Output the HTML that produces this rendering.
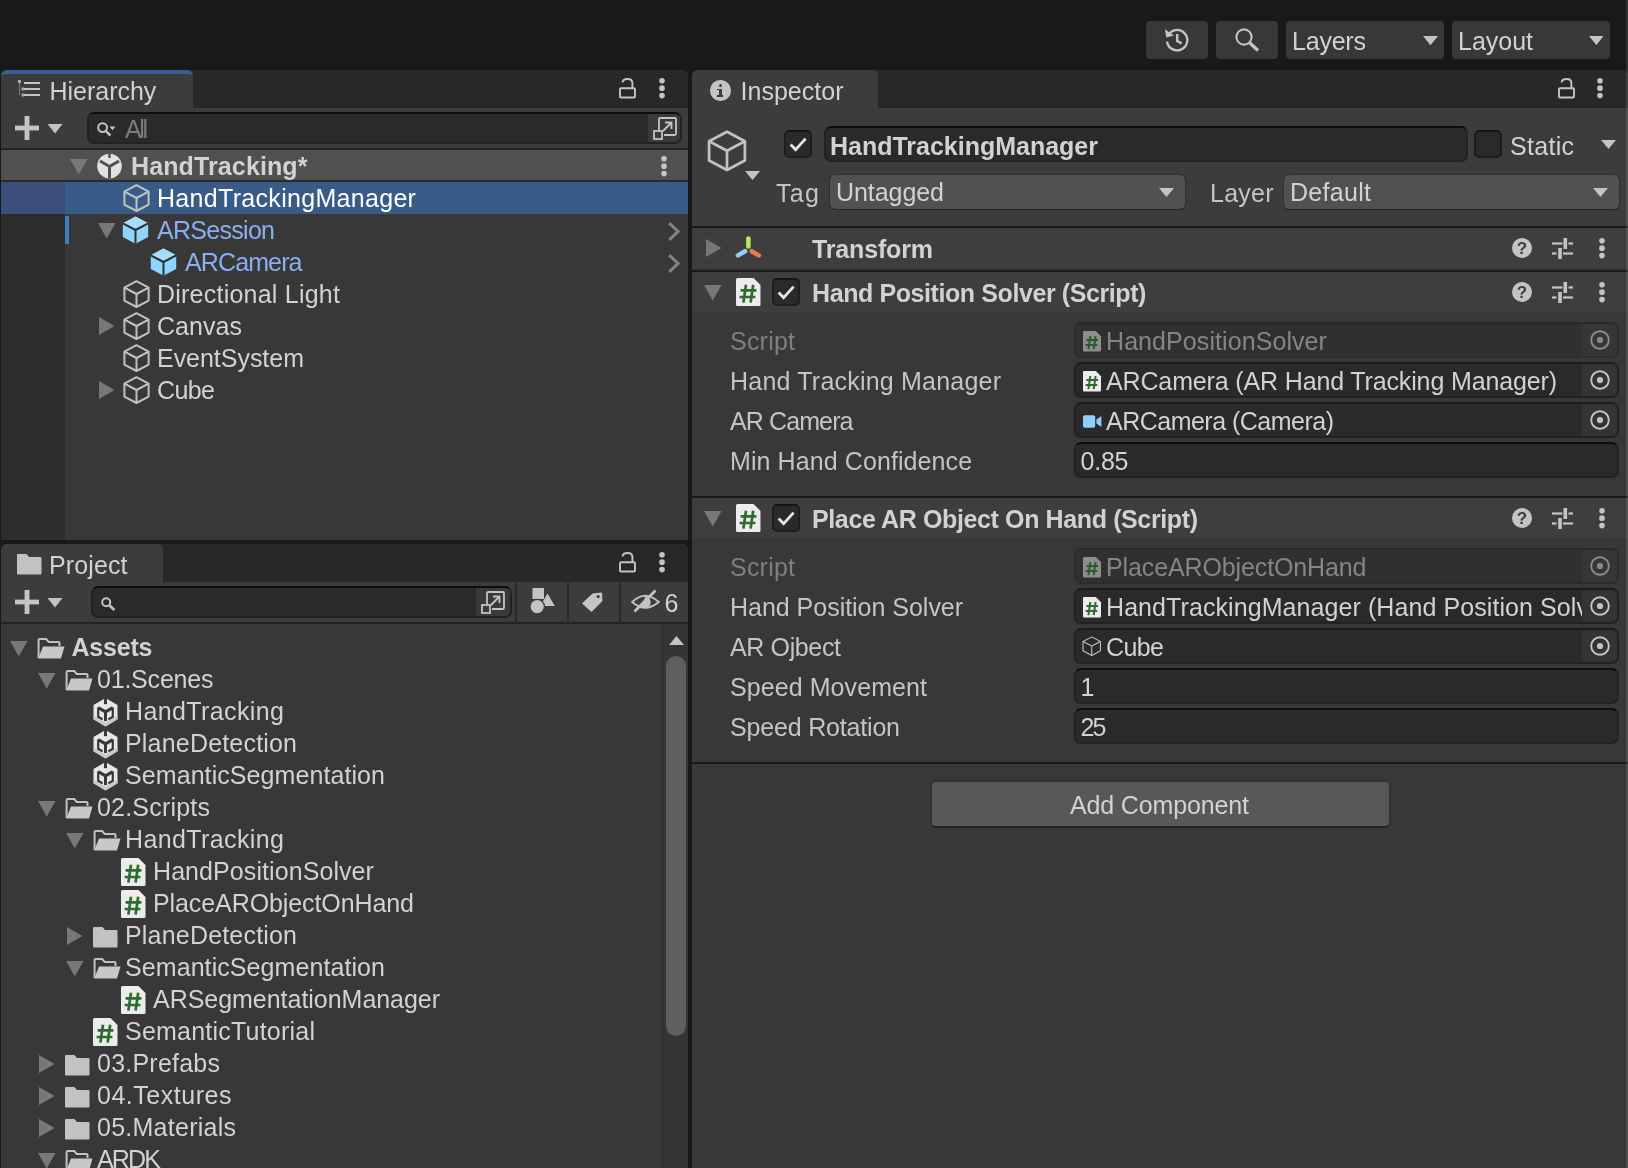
<!DOCTYPE html>
<html><head><meta charset="utf-8"><title>Unity Editor</title><style>
html,body{margin:0;padding:0;background:#191919;}
body{width:1628px;height:1168px;position:relative;overflow:hidden;font-family:"Liberation Sans",sans-serif;}
#r div,#r svg,#r span{position:absolute;box-sizing:border-box;}
#r span{white-space:pre;display:block;}
#r{position:absolute;left:0;top:0;width:1628px;height:1168px;overflow:hidden;will-change:transform;transform:translateZ(0);}
</style></head>
<body><div id="r">
<div style="left:1146px;top:21px;width:62px;height:38px;background:#383838;border-radius:4px;"></div>
<div style="left:1216px;top:21px;width:62px;height:38px;background:#383838;border-radius:4px;"></div>
<div style="left:1286px;top:21px;width:158px;height:38px;background:#383838;border-radius:4px;"></div>
<div style="left:1452px;top:21px;width:158px;height:38px;background:#383838;border-radius:4px;"></div>
<svg style="left:1164px;top:27px" width="26" height="26" viewBox="0 0 26 26"><g fill="none" stroke="#c4c4c4" stroke-width="2.3"><path d="M4.2 8.2 A10.2 10.2 0 1 1 3 14.5"/><path d="M13.2 7 V14 L17.6 16.4" stroke-width="2.5"/></g><path d="M1 2.2 L2.2 10.6 L10 8.6 Z" fill="#c4c4c4"/></svg>
<svg style="left:1234.5px;top:28px" width="25" height="24" viewBox="0 0 25 24"><circle cx="9" cy="9" r="7.6" fill="none" stroke="#c4c4c4" stroke-width="2.1"/><path d="M14.6 14.8 L23 22.4" stroke="#c4c4c4" stroke-width="3.4"/></svg>
<span style="left:1292px;top:24.5px;line-height:32px;font-size:25px;color:#d2d2d2;letter-spacing:-0.21px;">Layers</span>
<span style="left:1458px;top:24.5px;line-height:32px;font-size:25px;color:#d2d2d2;letter-spacing:-0.01px;">Layout</span>
<div style="left:1px;top:70px;width:687px;height:470px;background:#383838;border-radius:6px 6px 0 0;"></div>
<div style="left:1px;top:70px;width:687px;height:38px;background:#282828;border-radius:6px 6px 0 0;"></div>
<div style="left:1px;top:70px;width:192px;height:38px;background:#3c3c3c;border-radius:6px 6px 0 0;border-top:4px solid #3a5f93;"></div>
<div style="left:1px;top:108px;width:687px;height:40px;background:#3c3c3c;"></div>
<div style="left:1px;top:148px;width:687px;height:2px;background:#232323;"></div>
<div style="left:1px;top:150px;width:687px;height:30px;background:#505050;"></div>
<div style="left:1px;top:180px;width:687px;height:2px;background:#2b2b2b;"></div>
<div style="left:1px;top:182px;width:64px;height:358px;background:#2d2d2d;"></div>
<div style="left:1px;top:544px;width:687px;height:624px;background:#383838;border-radius:6px 6px 0 0;"></div>
<div style="left:1px;top:544px;width:687px;height:38px;background:#282828;border-radius:6px 6px 0 0;"></div>
<div style="left:1px;top:544px;width:162px;height:38px;background:#3c3c3c;border-radius:6px 6px 0 0;"></div>
<div style="left:1px;top:582px;width:687px;height:40px;background:#3c3c3c;"></div>
<div style="left:1px;top:622px;width:687px;height:2px;background:#232323;"></div>
<div style="left:692px;top:70px;width:936px;height:1098px;background:#383838;border-radius:6px 6px 0 0;"></div>
<div style="left:692px;top:70px;width:936px;height:38px;background:#282828;border-radius:6px 6px 0 0;"></div>
<div style="left:692px;top:70px;width:186px;height:38px;background:#3c3c3c;border-radius:6px 6px 0 0;"></div>
<div style="left:692px;top:108px;width:936px;height:118px;background:#3c3c3c;"></div>
<svg style="left:1422.5px;top:35.8px" width="15" height="9.2" viewBox="0 0 15 9.2"><polygon points="0,0 15,0 7.5,9.2" fill="#c4c4c4"/></svg>
<svg style="left:1588.8px;top:36px" width="14.6" height="9" viewBox="0 0 14.6 9"><polygon points="0,0 14.6,0 7.3,9" fill="#c4c4c4"/></svg>
<svg style="left:17px;top:80px" width="23" height="18" viewBox="0 0 23 18"><g fill="#c4c4c4"><rect x="7" y="2" width="16" height="2"/><rect x="7" y="8" width="16" height="2"/><rect x="7" y="14" width="16" height="2"/><rect x="1" y="0" width="3" height="3" opacity=".8"/><rect x="4.5" y="7.5" width="3" height="3" opacity=".8"/><rect x="4.5" y="13.5" width="3" height="3" opacity=".8"/><rect x="2" y="2" width="1" height="13" opacity=".45"/></g></svg>
<span style="left:49.4px;top:74.9px;line-height:32px;font-size:25px;color:#d2d2d2;letter-spacing:0.0px;">Hierarchy</span>
<svg style="left:619px;top:77.5px" width="18" height="21" viewBox="0 0 18 21"><g fill="none" stroke="#c4c4c4" stroke-width="1.9"><rect x="1" y="10.2" width="15" height="9.3" rx="1"/><path d="M3.6 4.5 Q3.6 1 8.5 1 Q13.4 1 13.4 5 L13.4 10"/></g></svg>
<svg style="left:658px;top:77px" width="8" height="23" viewBox="0 0 8 23"><g fill="#c4c4c4"><circle cx="4" cy="3.7" r="2.8"/><circle cx="4" cy="11.15" r="2.8"/><circle cx="4" cy="18.6" r="2.8"/></g></svg>
<svg style="left:15px;top:116px" width="50" height="24" viewBox="0 0 50 24"><g fill="#c4c4c4"><rect x="0" y="9.6" width="24" height="4.8"/><rect x="9.6" y="0" width="4.8" height="24"/><polygon points="32.5,8 47.5,8 40,17.5"/></g></svg>
<div style="left:87px;top:112px;width:595px;height:32px;background:#2a2a2a;border:2px solid #222;border-top-color:#0d0d0d;border-radius:7px;"></div>
<div style="left:648px;top:114px;width:32px;height:28px;background:#3a3a3a;border-radius:0 5px 5px 0;"></div>
<svg style="left:653px;top:116.5px" width="24" height="23" viewBox="0 0 24 23"><g fill="none" stroke="#c4c4c4" stroke-width="1.8"><path d="M6 13 V2.2 Q6 1 7.2 1 H21.8 Q23 1 23 2.2 V16.8 Q23 18 21.8 18 H11"/><rect x="1" y="14" width="8" height="8"/><path d="M10 14 L18 6 M12 5.5 H18.5 V12"/></g></svg>
<svg style="left:97px;top:122px" width="19" height="15" viewBox="0 0 19 15"><circle cx="5.6" cy="5.6" r="4.4" fill="none" stroke="#c4c4c4" stroke-width="2"/><path d="M8.8 8.8 L13.4 13.6" stroke="#c4c4c4" stroke-width="2.4"/><polygon points="12.5,4.5 18.5,4.5 15.5,8.2" fill="#c4c4c4"/></svg>
<span style="left:125px;top:112.9px;line-height:32px;font-size:25px;color:#7b7b7b;letter-spacing:-2.4px;">All</span>
<svg style="left:69.5px;top:159px" width="18" height="16" viewBox="0 0 18 16"><polygon points="0,0 17.5,0 8.75,15.5" fill="#787878"/></svg>
<svg style="left:97px;top:151.5px" width="25" height="28" viewBox="0 0 25 28"><circle cx="12.5" cy="14" r="12.3" fill="#e2e2e2"/><g fill="none" stroke="#505050" stroke-width="3"><path d="M12.5 14.5 V26 M12.5 14.5 L3 9 M12.5 14.5 L22 9"/><path d="M12.5 0 V6" stroke-width="2.4"/></g></svg>
<span style="left:131px;top:150.0px;line-height:32px;font-size:25px;color:#d2d2d2;letter-spacing:0.12px;font-weight:700;">HandTracking*</span>
<svg style="left:660px;top:155px" width="8" height="23" viewBox="0 0 8 23"><g fill="#c4c4c4"><circle cx="4" cy="3.7" r="2.8"/><circle cx="4" cy="11.15" r="2.8"/><circle cx="4" cy="18.6" r="2.8"/></g></svg>
<div style="left:1px;top:182px;width:64px;height:32px;background:#3b4f7b;"></div>
<div style="left:65px;top:182px;width:623px;height:32px;background:#395b87;"></div>
<svg style="left:122.5px;top:184.4px" width="28" height="29" viewBox="0 0 28 29"><g transform="scale(1.0)" fill="none" stroke="#c2c2c2" stroke-width="2.0" stroke-linejoin="round"><path d="M13.5 1.2 L25.6 7.6 V20.6 L13.5 27 L1.4 20.6 V7.6 Z"/><path d="M1.4 7.6 L13.5 14 L25.6 7.6 M13.5 14 V27"/></g></svg>
<span style="left:157px;top:181.9px;line-height:32px;font-size:25px;color:#ffffff;letter-spacing:0.31px;">HandTrackingManager</span>
<div style="left:65px;top:216px;width:4px;height:28px;background:#3f7dc4;"></div>
<svg style="left:97.5px;top:222.8px" width="18" height="16" viewBox="0 0 18 16"><polygon points="0,0 17.5,0 8.75,15.5" fill="#787878"/></svg>
<svg style="left:122.3px;top:216px" width="28" height="29" viewBox="0 0 28 29"><path d="M13.5 0.6 L26.2 7.3 V21 L13.5 27.8 L0.8 21 V7.3 Z" fill="#8fd4fb"/><path d="M13.5 0.6 L26.2 7.3 L13.5 14 L0.8 7.3 Z" fill="#a5defd"/><path d="M0.8 7.3 L13.5 14 L26.2 7.3 M13.5 14 V27.8" fill="none" stroke="#2f2f2f" stroke-width="2"/></svg>
<span style="left:157px;top:213.9px;line-height:32px;font-size:25px;color:#8badf3;letter-spacing:-0.71px;">ARSession</span>
<svg style="left:668px;top:222px" width="12" height="19" viewBox="0 0 12 19"><path d="M1.2 1.2 L10 9.5 L1.2 17.8" fill="none" stroke="#828282" stroke-width="3"/></svg>
<svg style="left:150.3px;top:248px" width="28" height="29" viewBox="0 0 28 29"><path d="M13.5 0.6 L26.2 7.3 V21 L13.5 27.8 L0.8 21 V7.3 Z" fill="#8fd4fb"/><path d="M13.5 0.6 L26.2 7.3 L13.5 14 L0.8 7.3 Z" fill="#a5defd"/><path d="M0.8 7.3 L13.5 14 L26.2 7.3 M13.5 14 V27.8" fill="none" stroke="#2f2f2f" stroke-width="2"/></svg>
<span style="left:185px;top:245.9px;line-height:32px;font-size:25px;color:#8badf3;letter-spacing:-0.88px;">ARCamera</span>
<svg style="left:668px;top:254px" width="12" height="19" viewBox="0 0 12 19"><path d="M1.2 1.2 L10 9.5 L1.2 17.8" fill="none" stroke="#828282" stroke-width="3"/></svg>
<svg style="left:122.5px;top:280.4px" width="28" height="29" viewBox="0 0 28 29"><g transform="scale(1.0)" fill="none" stroke="#c2c2c2" stroke-width="2.0" stroke-linejoin="round"><path d="M13.5 1.2 L25.6 7.6 V20.6 L13.5 27 L1.4 20.6 V7.6 Z"/><path d="M1.4 7.6 L13.5 14 L25.6 7.6 M13.5 14 V27"/></g></svg>
<span style="left:157px;top:277.9px;line-height:32px;font-size:25px;color:#d2d2d2;letter-spacing:0.23px;">Directional Light</span>
<svg style="left:99px;top:317px" width="16" height="18" viewBox="0 0 16 18"><polygon points="0,0 15.5,9 0,18" fill="#787878"/></svg>
<svg style="left:122.5px;top:312.4px" width="28" height="29" viewBox="0 0 28 29"><g transform="scale(1.0)" fill="none" stroke="#c2c2c2" stroke-width="2.0" stroke-linejoin="round"><path d="M13.5 1.2 L25.6 7.6 V20.6 L13.5 27 L1.4 20.6 V7.6 Z"/><path d="M1.4 7.6 L13.5 14 L25.6 7.6 M13.5 14 V27"/></g></svg>
<span style="left:157px;top:309.9px;line-height:32px;font-size:25px;color:#d2d2d2;letter-spacing:0.05px;">Canvas</span>
<svg style="left:122.5px;top:344.4px" width="28" height="29" viewBox="0 0 28 29"><g transform="scale(1.0)" fill="none" stroke="#c2c2c2" stroke-width="2.0" stroke-linejoin="round"><path d="M13.5 1.2 L25.6 7.6 V20.6 L13.5 27 L1.4 20.6 V7.6 Z"/><path d="M1.4 7.6 L13.5 14 L25.6 7.6 M13.5 14 V27"/></g></svg>
<span style="left:157px;top:341.9px;line-height:32px;font-size:25px;color:#d2d2d2;letter-spacing:-0.03px;">EventSystem</span>
<svg style="left:99px;top:381px" width="16" height="18" viewBox="0 0 16 18"><polygon points="0,0 15.5,9 0,18" fill="#787878"/></svg>
<svg style="left:122.5px;top:376.4px" width="28" height="29" viewBox="0 0 28 29"><g transform="scale(1.0)" fill="none" stroke="#c2c2c2" stroke-width="2.0" stroke-linejoin="round"><path d="M13.5 1.2 L25.6 7.6 V20.6 L13.5 27 L1.4 20.6 V7.6 Z"/><path d="M1.4 7.6 L13.5 14 L25.6 7.6 M13.5 14 V27"/></g></svg>
<span style="left:157px;top:373.9px;line-height:32px;font-size:25px;color:#d2d2d2;letter-spacing:-0.59px;">Cube</span>
<svg style="left:16.5px;top:553.5px" width="25" height="21" viewBox="0 0 25 21"><path d="M1 0 H9.5 L12 3 H23.5 Q24.5 3 24.5 4 V19.5 Q24.5 20.5 23.5 20.5 H1 Q0 20.5 0 19.5 V1 Q0 0 1 0 Z" fill="#c2c2c2"/></svg>
<span style="left:49px;top:548.9px;line-height:32px;font-size:25px;color:#d2d2d2;letter-spacing:0.11px;">Project</span>
<svg style="left:619px;top:551.5px" width="18" height="21" viewBox="0 0 18 21"><g fill="none" stroke="#c4c4c4" stroke-width="1.9"><rect x="1" y="10.2" width="15" height="9.3" rx="1"/><path d="M3.6 4.5 Q3.6 1 8.5 1 Q13.4 1 13.4 5 L13.4 10"/></g></svg>
<svg style="left:658px;top:551px" width="8" height="23" viewBox="0 0 8 23"><g fill="#c4c4c4"><circle cx="4" cy="3.7" r="2.8"/><circle cx="4" cy="11.15" r="2.8"/><circle cx="4" cy="18.6" r="2.8"/></g></svg>
<svg style="left:15px;top:590px" width="50" height="24" viewBox="0 0 50 24"><g fill="#c4c4c4"><rect x="0" y="9.6" width="24" height="4.8"/><rect x="9.6" y="0" width="4.8" height="24"/><polygon points="32.5,8 47.5,8 40,17.5"/></g></svg>
<div style="left:91px;top:586px;width:421px;height:32px;background:#2a2a2a;border:2px solid #222;border-top-color:#0d0d0d;border-radius:7px;"></div>
<div style="left:476px;top:588px;width:34px;height:28px;background:#3a3a3a;border-radius:0 5px 5px 0;"></div>
<svg style="left:481px;top:590.5px" width="24" height="23" viewBox="0 0 24 23"><g fill="none" stroke="#c4c4c4" stroke-width="1.8"><path d="M6 13 V2.2 Q6 1 7.2 1 H21.8 Q23 1 23 2.2 V16.8 Q23 18 21.8 18 H11"/><rect x="1" y="14" width="8" height="8"/><path d="M10 14 L18 6 M12 5.5 H18.5 V12"/></g></svg>
<svg style="left:100.5px;top:597px" width="15" height="14" viewBox="0 0 15 14"><circle cx="5.2" cy="5.2" r="4" fill="none" stroke="#c4c4c4" stroke-width="2"/><path d="M8.2 8.2 L13.4 13" stroke="#c4c4c4" stroke-width="2.6"/></svg>
<div style="left:515px;top:582px;width:2px;height:40px;background:#2a2a2a;"></div>
<div style="left:567px;top:582px;width:2px;height:40px;background:#2a2a2a;"></div>
<div style="left:619px;top:582px;width:2px;height:40px;background:#2a2a2a;"></div>
<svg style="left:529.5px;top:588px" width="25" height="26" viewBox="0 0 25 26"><g fill="#c4c4c4"><rect x="2.5" y="0" width="11.5" height="11"/><polygon points="17.5,5.5 24.8,18 10.2,18"/><circle cx="7.2" cy="18.6" r="7.2" stroke="#3c3c3c" stroke-width="1.2"/></g></svg>
<svg style="left:582px;top:592px" width="21" height="20" viewBox="0 0 21 20"><path d="M0 11.5 L10.5 1.5 L20 0.5 L20.5 9 L9.5 20 Z" fill="#c4c4c4"/><circle cx="16.2" cy="4.6" r="1.6" fill="#3c3c3c"/></svg>
<svg style="left:631px;top:589px" width="29" height="24" viewBox="0 0 29 24"><g fill="none" stroke="#c4c4c4" stroke-width="1.9"><path d="M1.2 13 Q14 0.5 27.8 13 Q14 24.5 1.2 13 Z"/><path d="M3.5 22.5 L24.5 1.5" stroke-width="2.6"/></g><path d="M14 7.5 A5.6 5.6 0 1 1 9 15.5 Q13.5 13 14 7.5Z" fill="#c4c4c4"/></svg>
<span style="left:664.5px;top:586.9px;line-height:32px;font-size:25px;color:#d2d2d2;letter-spacing:0.35px;">6</span>
<div style="left:662px;top:624px;width:26px;height:544px;background:#353535;"></div>
<div style="left:662px;top:624px;width:2px;height:544px;background:#303030;"></div>
<svg style="left:668.5px;top:635.5px" width="15" height="9" viewBox="0 0 15 9"><polygon points="0,9 15,9 7.5,0" fill="#c4c4c4"/></svg>
<div style="left:666px;top:655.5px;width:20px;height:380px;background:#5f5f5f;border-radius:10px;"></div>
<svg style="left:9.5px;top:641.2px" width="18" height="16" viewBox="0 0 18 16"><polygon points="0,0 17.5,0 8.75,15.5" fill="#787878"/></svg>
<svg style="left:36.8px;top:638px" width="28" height="21" viewBox="0 0 28 21"><path d="M1.6 20 V2 Q1.6 1 2.6 1 H9.2 L11.7 4 H21.5 Q22.5 4 22.5 5 V8" fill="none" stroke="#c2c2c2" stroke-width="2"/><path d="M6 8.5 H27.5 L24 20.5 H1.2 Z" fill="#c8c8c8"/></svg>
<span style="left:71.5px;top:630.9px;line-height:32px;font-size:25px;color:#d2d2d2;letter-spacing:-0.2px;font-weight:700;">Assets</span>
<svg style="left:37.5px;top:673.2px" width="18" height="16" viewBox="0 0 18 16"><polygon points="0,0 17.5,0 8.75,15.5" fill="#787878"/></svg>
<svg style="left:64.8px;top:670px" width="28" height="21" viewBox="0 0 28 21"><path d="M1.6 20 V2 Q1.6 1 2.6 1 H9.2 L11.7 4 H21.5 Q22.5 4 22.5 5 V8" fill="none" stroke="#c2c2c2" stroke-width="2"/><path d="M6 8.5 H27.5 L24 20.5 H1.2 Z" fill="#c8c8c8"/></svg>
<span style="left:97px;top:662.9px;line-height:32px;font-size:25px;color:#d2d2d2;letter-spacing:-0.21px;">01.Scenes</span>
<svg style="left:92.5px;top:697.9px" width="25" height="29" viewBox="0 0 25 29"><path d="M12.5 0 L24.5 6.9 V21.3 L12.5 28.4 L0.5 21.3 V6.9 Z" fill="#e6e6e6"/><path d="M0.5 21.3 L12.5 28.4 L24.5 21.3 V17.5 L12.5 24.6 L0.5 17.5 Z" fill="#c9c9c9"/><g fill="none" stroke="#383838"><path d="M5.2 9.6 L12.5 13.9 L19.8 9.6 M12.5 13.9 V23" stroke-width="3"/><path d="M12.5 0 V6.2" stroke-width="3"/><path d="M5.2 9.6 V18.8 L9.6 21.4 M19.8 9.6 V18.8 L15.4 21.4" stroke-width="2.2"/></g></svg>
<span style="left:125px;top:694.9px;line-height:32px;font-size:25px;color:#d2d2d2;letter-spacing:0.39px;">HandTracking</span>
<svg style="left:92.5px;top:729.9px" width="25" height="29" viewBox="0 0 25 29"><path d="M12.5 0 L24.5 6.9 V21.3 L12.5 28.4 L0.5 21.3 V6.9 Z" fill="#e6e6e6"/><path d="M0.5 21.3 L12.5 28.4 L24.5 21.3 V17.5 L12.5 24.6 L0.5 17.5 Z" fill="#c9c9c9"/><g fill="none" stroke="#383838"><path d="M5.2 9.6 L12.5 13.9 L19.8 9.6 M12.5 13.9 V23" stroke-width="3"/><path d="M12.5 0 V6.2" stroke-width="3"/><path d="M5.2 9.6 V18.8 L9.6 21.4 M19.8 9.6 V18.8 L15.4 21.4" stroke-width="2.2"/></g></svg>
<span style="left:125px;top:726.9px;line-height:32px;font-size:25px;color:#d2d2d2;letter-spacing:0.19px;">PlaneDetection</span>
<svg style="left:92.5px;top:761.9px" width="25" height="29" viewBox="0 0 25 29"><path d="M12.5 0 L24.5 6.9 V21.3 L12.5 28.4 L0.5 21.3 V6.9 Z" fill="#e6e6e6"/><path d="M0.5 21.3 L12.5 28.4 L24.5 21.3 V17.5 L12.5 24.6 L0.5 17.5 Z" fill="#c9c9c9"/><g fill="none" stroke="#383838"><path d="M5.2 9.6 L12.5 13.9 L19.8 9.6 M12.5 13.9 V23" stroke-width="3"/><path d="M12.5 0 V6.2" stroke-width="3"/><path d="M5.2 9.6 V18.8 L9.6 21.4 M19.8 9.6 V18.8 L15.4 21.4" stroke-width="2.2"/></g></svg>
<span style="left:125px;top:758.9px;line-height:32px;font-size:25px;color:#d2d2d2;letter-spacing:0.08px;">SemanticSegmentation</span>
<svg style="left:37.5px;top:801.2px" width="18" height="16" viewBox="0 0 18 16"><polygon points="0,0 17.5,0 8.75,15.5" fill="#787878"/></svg>
<svg style="left:64.8px;top:798px" width="28" height="21" viewBox="0 0 28 21"><path d="M1.6 20 V2 Q1.6 1 2.6 1 H9.2 L11.7 4 H21.5 Q22.5 4 22.5 5 V8" fill="none" stroke="#c2c2c2" stroke-width="2"/><path d="M6 8.5 H27.5 L24 20.5 H1.2 Z" fill="#c8c8c8"/></svg>
<span style="left:97px;top:790.9px;line-height:32px;font-size:25px;color:#d2d2d2;letter-spacing:0.2px;">02.Scripts</span>
<svg style="left:65.5px;top:833.2px" width="18" height="16" viewBox="0 0 18 16"><polygon points="0,0 17.5,0 8.75,15.5" fill="#787878"/></svg>
<svg style="left:92.8px;top:830px" width="28" height="21" viewBox="0 0 28 21"><path d="M1.6 20 V2 Q1.6 1 2.6 1 H9.2 L11.7 4 H21.5 Q22.5 4 22.5 5 V8" fill="none" stroke="#c2c2c2" stroke-width="2"/><path d="M6 8.5 H27.5 L24 20.5 H1.2 Z" fill="#c8c8c8"/></svg>
<span style="left:125px;top:822.9px;line-height:32px;font-size:25px;color:#d2d2d2;letter-spacing:0.39px;">HandTracking</span>
<svg style="left:120.5px;top:858.3px" width="25" height="28" viewBox="0 0 25 28"><g transform="scale(1.0)"><path d="M1.5 0 H17.5 L24.5 7 V26.5 Q24.5 28 23 28 H1.5 Q0 28 0 26.5 V1.5 Q0 0 1.5 0 Z" fill="#ececec"/><g stroke="#2f6a2f" stroke-width="2.7" fill="none"><path d="M10 6.8 L7.4 24.6 M17.2 6.8 L14.6 24.6 M4.6 12.4 H20.4 M3.6 19 H19.4"/></g></g></svg>
<span style="left:153px;top:854.9px;line-height:32px;font-size:25px;color:#d2d2d2;letter-spacing:0.08px;">HandPositionSolver</span>
<svg style="left:120.5px;top:890.3px" width="25" height="28" viewBox="0 0 25 28"><g transform="scale(1.0)"><path d="M1.5 0 H17.5 L24.5 7 V26.5 Q24.5 28 23 28 H1.5 Q0 28 0 26.5 V1.5 Q0 0 1.5 0 Z" fill="#ececec"/><g stroke="#2f6a2f" stroke-width="2.7" fill="none"><path d="M10 6.8 L7.4 24.6 M17.2 6.8 L14.6 24.6 M4.6 12.4 H20.4 M3.6 19 H19.4"/></g></g></svg>
<span style="left:153px;top:886.9px;line-height:32px;font-size:25px;color:#d2d2d2;letter-spacing:-0.09px;">PlaceARObjectOnHand</span>
<svg style="left:67.0px;top:927px" width="16" height="18" viewBox="0 0 16 18"><polygon points="0,0 15.5,9 0,18" fill="#787878"/></svg>
<svg style="left:93.0px;top:926.5px" width="25" height="21" viewBox="0 0 25 21"><path d="M1 0 H9.5 L12 3 H23.5 Q24.5 3 24.5 4 V19.5 Q24.5 20.5 23.5 20.5 H1 Q0 20.5 0 19.5 V1 Q0 0 1 0 Z" fill="#c2c2c2"/></svg>
<span style="left:125px;top:918.9px;line-height:32px;font-size:25px;color:#d2d2d2;letter-spacing:0.19px;">PlaneDetection</span>
<svg style="left:65.5px;top:961.2px" width="18" height="16" viewBox="0 0 18 16"><polygon points="0,0 17.5,0 8.75,15.5" fill="#787878"/></svg>
<svg style="left:92.8px;top:958px" width="28" height="21" viewBox="0 0 28 21"><path d="M1.6 20 V2 Q1.6 1 2.6 1 H9.2 L11.7 4 H21.5 Q22.5 4 22.5 5 V8" fill="none" stroke="#c2c2c2" stroke-width="2"/><path d="M6 8.5 H27.5 L24 20.5 H1.2 Z" fill="#c8c8c8"/></svg>
<span style="left:125px;top:950.9px;line-height:32px;font-size:25px;color:#d2d2d2;letter-spacing:0.08px;">SemanticSegmentation</span>
<svg style="left:120.5px;top:986.3px" width="25" height="28" viewBox="0 0 25 28"><g transform="scale(1.0)"><path d="M1.5 0 H17.5 L24.5 7 V26.5 Q24.5 28 23 28 H1.5 Q0 28 0 26.5 V1.5 Q0 0 1.5 0 Z" fill="#ececec"/><g stroke="#2f6a2f" stroke-width="2.7" fill="none"><path d="M10 6.8 L7.4 24.6 M17.2 6.8 L14.6 24.6 M4.6 12.4 H20.4 M3.6 19 H19.4"/></g></g></svg>
<span style="left:153px;top:982.9px;line-height:32px;font-size:25px;color:#d2d2d2;letter-spacing:-0.03px;">ARSegmentationManager</span>
<svg style="left:92.5px;top:1018.3px" width="25" height="28" viewBox="0 0 25 28"><g transform="scale(1.0)"><path d="M1.5 0 H17.5 L24.5 7 V26.5 Q24.5 28 23 28 H1.5 Q0 28 0 26.5 V1.5 Q0 0 1.5 0 Z" fill="#ececec"/><g stroke="#2f6a2f" stroke-width="2.7" fill="none"><path d="M10 6.8 L7.4 24.6 M17.2 6.8 L14.6 24.6 M4.6 12.4 H20.4 M3.6 19 H19.4"/></g></g></svg>
<span style="left:125px;top:1014.9px;line-height:32px;font-size:25px;color:#d2d2d2;letter-spacing:0.22px;">SemanticTutorial</span>
<svg style="left:39.0px;top:1055px" width="16" height="18" viewBox="0 0 16 18"><polygon points="0,0 15.5,9 0,18" fill="#787878"/></svg>
<svg style="left:65.0px;top:1054.5px" width="25" height="21" viewBox="0 0 25 21"><path d="M1 0 H9.5 L12 3 H23.5 Q24.5 3 24.5 4 V19.5 Q24.5 20.5 23.5 20.5 H1 Q0 20.5 0 19.5 V1 Q0 0 1 0 Z" fill="#c2c2c2"/></svg>
<span style="left:97px;top:1046.9px;line-height:32px;font-size:25px;color:#d2d2d2;letter-spacing:0.23px;">03.Prefabs</span>
<svg style="left:39.0px;top:1087px" width="16" height="18" viewBox="0 0 16 18"><polygon points="0,0 15.5,9 0,18" fill="#787878"/></svg>
<svg style="left:65.0px;top:1086.5px" width="25" height="21" viewBox="0 0 25 21"><path d="M1 0 H9.5 L12 3 H23.5 Q24.5 3 24.5 4 V19.5 Q24.5 20.5 23.5 20.5 H1 Q0 20.5 0 19.5 V1 Q0 0 1 0 Z" fill="#c2c2c2"/></svg>
<span style="left:97px;top:1078.9px;line-height:32px;font-size:25px;color:#d2d2d2;letter-spacing:0.53px;">04.Textures</span>
<svg style="left:39.0px;top:1119px" width="16" height="18" viewBox="0 0 16 18"><polygon points="0,0 15.5,9 0,18" fill="#787878"/></svg>
<svg style="left:65.0px;top:1118.5px" width="25" height="21" viewBox="0 0 25 21"><path d="M1 0 H9.5 L12 3 H23.5 Q24.5 3 24.5 4 V19.5 Q24.5 20.5 23.5 20.5 H1 Q0 20.5 0 19.5 V1 Q0 0 1 0 Z" fill="#c2c2c2"/></svg>
<span style="left:97px;top:1110.9px;line-height:32px;font-size:25px;color:#d2d2d2;letter-spacing:0.26px;">05.Materials</span>
<svg style="left:37.5px;top:1153.2px" width="18" height="16" viewBox="0 0 18 16"><polygon points="0,0 17.5,0 8.75,15.5" fill="#787878"/></svg>
<svg style="left:64.8px;top:1150px" width="28" height="21" viewBox="0 0 28 21"><path d="M1.6 20 V2 Q1.6 1 2.6 1 H9.2 L11.7 4 H21.5 Q22.5 4 22.5 5 V8" fill="none" stroke="#c2c2c2" stroke-width="2"/><path d="M6 8.5 H27.5 L24 20.5 H1.2 Z" fill="#c8c8c8"/></svg>
<span style="left:97px;top:1142.9px;line-height:32px;font-size:25px;color:#d2d2d2;letter-spacing:-1.82px;">ARDK</span>
<div style="left:710px;top:80px;width:20.5px;height:20.5px;border-radius:50%;background:#c4c4c4;"></div>
<div style="left:718.6px;top:84px;width:3.4px;height:3.4px;background:#3c3c3c;border-radius:50%;"></div>
<div style="left:718.8px;top:88.6px;width:3px;height:8px;background:#3c3c3c;"></div>
<div style="left:717.4px;top:88.6px;width:3px;height:1.8px;background:#3c3c3c;"></div>
<div style="left:717.2px;top:94.8px;width:6.2px;height:1.8px;background:#3c3c3c;"></div>
<span style="left:740.5px;top:74.9px;line-height:32px;font-size:25px;color:#d2d2d2;letter-spacing:0.02px;">Inspector</span>
<svg style="left:1557.5px;top:77.5px" width="18" height="21" viewBox="0 0 18 21"><g fill="none" stroke="#c4c4c4" stroke-width="1.9"><rect x="1" y="10.2" width="15" height="9.3" rx="1"/><path d="M3.6 4.5 Q3.6 1 8.5 1 Q13.4 1 13.4 5 L13.4 10"/></g></svg>
<svg style="left:1596px;top:77px" width="8" height="23" viewBox="0 0 8 23"><g fill="#c4c4c4"><circle cx="4" cy="3.7" r="2.8"/><circle cx="4" cy="11.15" r="2.8"/><circle cx="4" cy="18.6" r="2.8"/></g></svg>
<svg style="left:706.5px;top:129.5px" width="41" height="42" viewBox="0 0 41 42"><g transform="scale(1.48)" fill="none" stroke="#c2c2c2" stroke-width="1.8243243243243246" stroke-linejoin="round"><path d="M13.5 1.2 L25.6 7.6 V20.6 L13.5 27 L1.4 20.6 V7.6 Z"/><path d="M1.4 7.6 L13.5 14 L25.6 7.6 M13.5 14 V27"/></g></svg>
<svg style="left:744.5px;top:170.5px" width="15" height="9" viewBox="0 0 15 9"><polygon points="0,0 15,0 7.5,9" fill="#c4c4c4"/></svg>
<div style="left:784px;top:130px;width:28px;height:28px;background:#2a2a2a;border:2px solid #1e1e1e;border-top-color:#141414;border-radius:5px;"></div>
<svg style="left:784px;top:130px" width="28" height="28" viewBox="0 0 28 28"><path d="M6.6 14.6 L11.6 19.6 L21.6 8.6" fill="none" stroke="#e4e4e4" stroke-width="2.8"/></svg>
<div style="left:824px;top:126px;width:644px;height:36px;background:#2a2a2a;border:2px solid #222;border-top-color:#0d0d0d;border-radius:7px;"></div>
<span style="left:830px;top:129.9px;line-height:32px;font-size:25px;color:#d2d2d2;letter-spacing:-0.01px;font-weight:700;">HandTrackingManager</span>
<div style="left:1474px;top:130px;width:28px;height:28px;background:#2a2a2a;border:2px solid #1e1e1e;border-top-color:#141414;border-radius:5px;"></div>
<span style="left:1510px;top:129.9px;line-height:32px;font-size:25px;color:#d2d2d2;letter-spacing:0.29px;">Static</span>
<svg style="left:1600.5px;top:140.3px" width="15" height="9" viewBox="0 0 15 9"><polygon points="0,0 15,0 7.5,9" fill="#c4c4c4"/></svg>
<span style="left:776px;top:177.1px;line-height:32px;font-size:25px;color:#c4c4c4;letter-spacing:1.34px;">Tag</span>
<div style="left:828.5px;top:174px;width:357.5px;height:35.5px;background:#515151;border:1.5px solid #303030;border-bottom-color:#262626;border-radius:6px;"></div>
<span style="left:836px;top:176.1px;line-height:32px;font-size:25px;color:#d2d2d2;letter-spacing:-0.06px;">Untagged</span>
<svg style="left:1158.5px;top:187.8px" width="15" height="9" viewBox="0 0 15 9"><polygon points="0,0 15,0 7.5,9" fill="#c4c4c4"/></svg>
<span style="left:1210px;top:177.1px;line-height:32px;font-size:25px;color:#c4c4c4;letter-spacing:0.24px;">Layer</span>
<div style="left:1282.5px;top:174px;width:337px;height:35.5px;background:#515151;border:1.5px solid #303030;border-bottom-color:#262626;border-radius:6px;"></div>
<span style="left:1290px;top:176.1px;line-height:32px;font-size:25px;color:#d2d2d2;letter-spacing:0.3px;">Default</span>
<svg style="left:1592.5px;top:187.8px" width="15" height="9" viewBox="0 0 15 9"><polygon points="0,0 15,0 7.5,9" fill="#c4c4c4"/></svg>
<div style="left:692px;top:226px;width:936px;height:2px;background:#1a1a1a;"></div>
<div style="left:692px;top:228px;width:936px;height:40px;background:#3e3e3e;"></div>
<svg style="left:706px;top:239px" width="16" height="18" viewBox="0 0 16 18"><polygon points="0,0 15.5,9 0,18" fill="#787878"/></svg>
<span style="left:812px;top:232.9px;line-height:32px;font-size:25px;color:#d2d2d2;letter-spacing:-0.16px;font-weight:700;">Transform</span>
<div style="left:1511.75px;top:237.75px;width:20.5px;height:20.5px;border-radius:50%;background:#c4c4c4;"></div>
<span style="left:1516.8px;top:238.5px;line-height:19px;font-size:17px;font-weight:700;color:#3e3e3e;">?</span>
<svg style="left:1551.5px;top:238.2px" width="21" height="21" viewBox="0 0 21 21"><g fill="#c4c4c4"><rect x="0" y="4.4" width="10.5" height="2.2"/><rect x="11.5" y="0" width="3.6" height="11"/><rect x="16.5" y="4.4" width="4.5" height="2.2"/><rect x="0" y="14.4" width="4.5" height="2.2"/><rect x="6.2" y="10" width="3.6" height="11"/><rect x="11" y="14.4" width="10" height="2.2"/></g></svg>
<svg style="left:1598px;top:237px" width="8" height="23" viewBox="0 0 8 23"><g fill="#c4c4c4"><circle cx="4" cy="3.7" r="2.8"/><circle cx="4" cy="11.15" r="2.8"/><circle cx="4" cy="18.6" r="2.8"/></g></svg>
<svg style="left:735px;top:236px" width="27" height="24" viewBox="0 0 27 24"><g stroke-linecap="round" stroke-width="4.6" fill="none"><path d="M13.4 2.6 V10.4" stroke="#b5e853"/><path d="M10 15.2 L3 19.4" stroke="#8fd0f8"/><path d="M16.8 15.2 L23.8 19.4" stroke="#ea7a4d"/></g></svg>
<div style="left:692px;top:270px;width:936px;height:2px;background:#1a1a1a;"></div>
<div style="left:692px;top:272px;width:936px;height:40px;background:#3e3e3e;"></div>
<svg style="left:704px;top:285.3px" width="18" height="16" viewBox="0 0 18 16"><polygon points="0,0 17.5,0 8.75,15.5" fill="#787878"/></svg>
<svg style="left:735.7px;top:277.8px" width="25" height="28" viewBox="0 0 25 28"><g transform="scale(1.0)"><path d="M1.5 0 H17.5 L24.5 7 V26.5 Q24.5 28 23 28 H1.5 Q0 28 0 26.5 V1.5 Q0 0 1.5 0 Z" fill="#ececec"/><g stroke="#2f6a2f" stroke-width="2.7" fill="none"><path d="M10 6.8 L7.4 24.6 M17.2 6.8 L14.6 24.6 M4.6 12.4 H20.4 M3.6 19 H19.4"/></g></g></svg>
<div style="left:772px;top:278px;width:28px;height:28px;background:#2a2a2a;border:2px solid #1e1e1e;border-top-color:#141414;border-radius:5px;"></div>
<svg style="left:772px;top:278px" width="28" height="28" viewBox="0 0 28 28"><path d="M6.6 14.6 L11.6 19.6 L21.6 8.6" fill="none" stroke="#e4e4e4" stroke-width="2.8"/></svg>
<span style="left:812px;top:276.9px;line-height:32px;font-size:25px;color:#d2d2d2;letter-spacing:-0.41px;font-weight:700;">Hand Position Solver (Script)</span>
<div style="left:1511.75px;top:281.75px;width:20.5px;height:20.5px;border-radius:50%;background:#c4c4c4;"></div>
<span style="left:1516.8px;top:282.5px;line-height:19px;font-size:17px;font-weight:700;color:#3e3e3e;">?</span>
<svg style="left:1551.5px;top:282.2px" width="21" height="21" viewBox="0 0 21 21"><g fill="#c4c4c4"><rect x="0" y="4.4" width="10.5" height="2.2"/><rect x="11.5" y="0" width="3.6" height="11"/><rect x="16.5" y="4.4" width="4.5" height="2.2"/><rect x="0" y="14.4" width="4.5" height="2.2"/><rect x="6.2" y="10" width="3.6" height="11"/><rect x="11" y="14.4" width="10" height="2.2"/></g></svg>
<svg style="left:1598px;top:281px" width="8" height="23" viewBox="0 0 8 23"><g fill="#c4c4c4"><circle cx="4" cy="3.7" r="2.8"/><circle cx="4" cy="11.15" r="2.8"/><circle cx="4" cy="18.6" r="2.8"/></g></svg>
<span style="left:730px;top:324.9px;line-height:32px;font-size:25px;color:#7f7f7f;letter-spacing:0.22px;">Script</span>
<div style="left:1074px;top:322px;width:545px;height:36px;background:#303030;border:2px solid #2c2c2c;border-top-color:#2a2a2a;border-radius:7px;"></div>
<div style="left:1582px;top:324px;width:35px;height:32px;background:#363636;border-radius:0 5px 5px 0;"></div>
<svg style="left:1590px;top:330px" width="20" height="20" viewBox="0 0 20 20"><circle cx="10" cy="10" r="8.8" fill="none" stroke="#8a8a8a" stroke-width="1.9"/><circle cx="10" cy="10" r="3.1" fill="#8a8a8a"/></svg>
<svg style="left:1083px;top:330.6px" width="19" height="21" viewBox="0 0 19 21"><g transform="scale(0.735)"><path d="M1.5 0 H17.5 L24.5 7 V26.5 Q24.5 28 23 28 H1.5 Q0 28 0 26.5 V1.5 Q0 0 1.5 0 Z" fill="#8d8d8d"/><g stroke="#2c5a2c" stroke-width="2.7" fill="none"><path d="M10 6.8 L7.4 24.6 M17.2 6.8 L14.6 24.6 M4.6 12.4 H20.4 M3.6 19 H19.4"/></g></g></svg>
<span style="left:1106px;top:325.3px;line-height:32px;font-size:25px;color:#858585;letter-spacing:0.08px;">HandPositionSolver</span>
<span style="left:730px;top:364.9px;line-height:32px;font-size:25px;color:#c4c4c4;letter-spacing:0.21px;">Hand Tracking Manager</span>
<div style="left:1074px;top:362px;width:545px;height:36px;background:#2a2a2a;border:2px solid #222;border-top-color:#1c1c1c;border-radius:7px;"></div>
<div style="left:1582px;top:364px;width:35px;height:32px;background:#343434;border-radius:0 5px 5px 0;"></div>
<svg style="left:1590px;top:370px" width="20" height="20" viewBox="0 0 20 20"><circle cx="10" cy="10" r="8.8" fill="none" stroke="#c4c4c4" stroke-width="1.9"/><circle cx="10" cy="10" r="3.1" fill="#c4c4c4"/></svg>
<svg style="left:1083px;top:370.6px" width="19" height="21" viewBox="0 0 19 21"><g transform="scale(0.735)"><path d="M1.5 0 H17.5 L24.5 7 V26.5 Q24.5 28 23 28 H1.5 Q0 28 0 26.5 V1.5 Q0 0 1.5 0 Z" fill="#ececec"/><g stroke="#2f6a2f" stroke-width="2.7" fill="none"><path d="M10 6.8 L7.4 24.6 M17.2 6.8 L14.6 24.6 M4.6 12.4 H20.4 M3.6 19 H19.4"/></g></g></svg>
<span style="left:1106px;top:365.3px;line-height:32px;font-size:25px;color:#d2d2d2;letter-spacing:-0.14px;">ARCamera (AR Hand Tracking Manager)</span>
<span style="left:730px;top:404.9px;line-height:32px;font-size:25px;color:#c4c4c4;letter-spacing:-0.89px;">AR Camera</span>
<div style="left:1074px;top:402px;width:545px;height:36px;background:#2a2a2a;border:2px solid #222;border-top-color:#1c1c1c;border-radius:7px;"></div>
<div style="left:1582px;top:404px;width:35px;height:32px;background:#343434;border-radius:0 5px 5px 0;"></div>
<svg style="left:1590px;top:410px" width="20" height="20" viewBox="0 0 20 20"><circle cx="10" cy="10" r="8.8" fill="none" stroke="#c4c4c4" stroke-width="1.9"/><circle cx="10" cy="10" r="3.1" fill="#c4c4c4"/></svg>
<svg style="left:1083px;top:414.6px" width="19" height="13" viewBox="0 0 19 13"><rect x="0" y="0.3" width="12.2" height="12.4" rx="1.8" fill="#8fd0f8"/><path d="M13.4 4.4 L18.4 1 V12 L13.4 8.6 Z" fill="#8fd0f8"/></svg>
<span style="left:1106px;top:405.3px;line-height:32px;font-size:25px;color:#d2d2d2;letter-spacing:-0.51px;">ARCamera (Camera)</span>
<span style="left:730px;top:444.9px;line-height:32px;font-size:25px;color:#c4c4c4;letter-spacing:0.09px;">Min Hand Confidence</span>
<div style="left:1074px;top:442px;width:545px;height:36px;background:#2a2a2a;border:2px solid #222;border-top-color:#0d0d0d;border-radius:7px;"></div>
<span style="left:1080.5px;top:445.3px;line-height:32px;font-size:25px;color:#d2d2d2;letter-spacing:-0.22px;">0.85</span>
<div style="left:692px;top:496px;width:936px;height:2px;background:#1a1a1a;"></div>
<div style="left:692px;top:498px;width:936px;height:40px;background:#3e3e3e;"></div>
<svg style="left:704px;top:511.3px" width="18" height="16" viewBox="0 0 18 16"><polygon points="0,0 17.5,0 8.75,15.5" fill="#787878"/></svg>
<svg style="left:735.7px;top:503.8px" width="25" height="28" viewBox="0 0 25 28"><g transform="scale(1.0)"><path d="M1.5 0 H17.5 L24.5 7 V26.5 Q24.5 28 23 28 H1.5 Q0 28 0 26.5 V1.5 Q0 0 1.5 0 Z" fill="#ececec"/><g stroke="#2f6a2f" stroke-width="2.7" fill="none"><path d="M10 6.8 L7.4 24.6 M17.2 6.8 L14.6 24.6 M4.6 12.4 H20.4 M3.6 19 H19.4"/></g></g></svg>
<div style="left:772px;top:504px;width:28px;height:28px;background:#2a2a2a;border:2px solid #1e1e1e;border-top-color:#141414;border-radius:5px;"></div>
<svg style="left:772px;top:504px" width="28" height="28" viewBox="0 0 28 28"><path d="M6.6 14.6 L11.6 19.6 L21.6 8.6" fill="none" stroke="#e4e4e4" stroke-width="2.8"/></svg>
<span style="left:812px;top:502.9px;line-height:32px;font-size:25px;color:#d2d2d2;letter-spacing:-0.38px;font-weight:700;">Place AR Object On Hand (Script)</span>
<div style="left:1511.75px;top:507.75px;width:20.5px;height:20.5px;border-radius:50%;background:#c4c4c4;"></div>
<span style="left:1516.8px;top:508.5px;line-height:19px;font-size:17px;font-weight:700;color:#3e3e3e;">?</span>
<svg style="left:1551.5px;top:508.2px" width="21" height="21" viewBox="0 0 21 21"><g fill="#c4c4c4"><rect x="0" y="4.4" width="10.5" height="2.2"/><rect x="11.5" y="0" width="3.6" height="11"/><rect x="16.5" y="4.4" width="4.5" height="2.2"/><rect x="0" y="14.4" width="4.5" height="2.2"/><rect x="6.2" y="10" width="3.6" height="11"/><rect x="11" y="14.4" width="10" height="2.2"/></g></svg>
<svg style="left:1598px;top:507px" width="8" height="23" viewBox="0 0 8 23"><g fill="#c4c4c4"><circle cx="4" cy="3.7" r="2.8"/><circle cx="4" cy="11.15" r="2.8"/><circle cx="4" cy="18.6" r="2.8"/></g></svg>
<span style="left:730px;top:550.9px;line-height:32px;font-size:25px;color:#7f7f7f;letter-spacing:0.22px;">Script</span>
<div style="left:1074px;top:548px;width:545px;height:36px;background:#303030;border:2px solid #2c2c2c;border-top-color:#2a2a2a;border-radius:7px;"></div>
<div style="left:1582px;top:550px;width:35px;height:32px;background:#363636;border-radius:0 5px 5px 0;"></div>
<svg style="left:1590px;top:556px" width="20" height="20" viewBox="0 0 20 20"><circle cx="10" cy="10" r="8.8" fill="none" stroke="#8a8a8a" stroke-width="1.9"/><circle cx="10" cy="10" r="3.1" fill="#8a8a8a"/></svg>
<svg style="left:1083px;top:556.6px" width="19" height="21" viewBox="0 0 19 21"><g transform="scale(0.735)"><path d="M1.5 0 H17.5 L24.5 7 V26.5 Q24.5 28 23 28 H1.5 Q0 28 0 26.5 V1.5 Q0 0 1.5 0 Z" fill="#8d8d8d"/><g stroke="#2c5a2c" stroke-width="2.7" fill="none"><path d="M10 6.8 L7.4 24.6 M17.2 6.8 L14.6 24.6 M4.6 12.4 H20.4 M3.6 19 H19.4"/></g></g></svg>
<span style="left:1106px;top:551.3px;line-height:32px;font-size:25px;color:#858585;letter-spacing:-0.12px;">PlaceARObjectOnHand</span>
<span style="left:730px;top:590.9px;line-height:32px;font-size:25px;color:#c4c4c4;letter-spacing:-0.02px;">Hand Position Solver</span>
<div style="left:1074px;top:588px;width:545px;height:36px;background:#2a2a2a;border:2px solid #222;border-top-color:#1c1c1c;border-radius:7px;"></div>
<div style="left:1582px;top:590px;width:35px;height:32px;background:#343434;border-radius:0 5px 5px 0;"></div>
<svg style="left:1590px;top:596px" width="20" height="20" viewBox="0 0 20 20"><circle cx="10" cy="10" r="8.8" fill="none" stroke="#c4c4c4" stroke-width="1.9"/><circle cx="10" cy="10" r="3.1" fill="#c4c4c4"/></svg>
<svg style="left:1083px;top:596.6px" width="19" height="21" viewBox="0 0 19 21"><g transform="scale(0.735)"><path d="M1.5 0 H17.5 L24.5 7 V26.5 Q24.5 28 23 28 H1.5 Q0 28 0 26.5 V1.5 Q0 0 1.5 0 Z" fill="#ececec"/><g stroke="#2f6a2f" stroke-width="2.7" fill="none"><path d="M10 6.8 L7.4 24.6 M17.2 6.8 L14.6 24.6 M4.6 12.4 H20.4 M3.6 19 H19.4"/></g></g></svg>
<span style="left:1106px;top:591.3px;line-height:32px;font-size:25px;color:#d2d2d2;letter-spacing:0.08px;width:476px;overflow:hidden;">HandTrackingManager (Hand Position Solver)</span>
<span style="left:730px;top:630.9px;line-height:32px;font-size:25px;color:#c4c4c4;letter-spacing:-0.37px;">AR Ojbect</span>
<div style="left:1074px;top:628px;width:545px;height:36px;background:#2a2a2a;border:2px solid #222;border-top-color:#1c1c1c;border-radius:7px;"></div>
<div style="left:1582px;top:630px;width:35px;height:32px;background:#343434;border-radius:0 5px 5px 0;"></div>
<svg style="left:1590px;top:636px" width="20" height="20" viewBox="0 0 20 20"><circle cx="10" cy="10" r="8.8" fill="none" stroke="#c4c4c4" stroke-width="1.9"/><circle cx="10" cy="10" r="3.1" fill="#c4c4c4"/></svg>
<svg style="left:1082px;top:636.2px" width="20" height="21" viewBox="0 0 20 21"><g transform="scale(0.72)" fill="none" stroke="#c2c2c2" stroke-width="1.5" stroke-linejoin="round"><path d="M13.5 1.2 L25.6 7.6 V20.6 L13.5 27 L1.4 20.6 V7.6 Z"/><path d="M1.4 7.6 L13.5 14 L25.6 7.6 M13.5 14 V27"/></g></svg>
<span style="left:1106px;top:631.3px;line-height:32px;font-size:25px;color:#d2d2d2;letter-spacing:-0.59px;">Cube</span>
<span style="left:730px;top:670.9px;line-height:32px;font-size:25px;color:#c4c4c4;letter-spacing:0.08px;">Speed Movement</span>
<div style="left:1074px;top:668px;width:545px;height:36px;background:#2a2a2a;border:2px solid #222;border-top-color:#0d0d0d;border-radius:7px;"></div>
<span style="left:1080.5px;top:671.3px;line-height:32px;font-size:25px;color:#d2d2d2;letter-spacing:0.35px;">1</span>
<span style="left:730px;top:710.9px;line-height:32px;font-size:25px;color:#c4c4c4;letter-spacing:-0.18px;">Speed Rotation</span>
<div style="left:1074px;top:708px;width:545px;height:36px;background:#2a2a2a;border:2px solid #222;border-top-color:#0d0d0d;border-radius:7px;"></div>
<span style="left:1080.5px;top:711.3px;line-height:32px;font-size:25px;color:#d2d2d2;letter-spacing:-1.81px;">25</span>
<div style="left:692px;top:762px;width:936px;height:2px;background:#1a1a1a;"></div>
<div style="left:929.5px;top:780px;width:461px;height:48px;background:#585858;border:2px solid #323232;border-bottom-color:#242424;border-radius:6px;"></div>
<span style="left:1070px;top:788.9px;line-height:32px;font-size:25px;color:#d2d2d2;letter-spacing:-0.14px;">Add Component</span>
<div style="left:1626px;top:0px;width:2px;height:1168px;background:rgba(255,255,255,0.12);"></div>
</div></body></html>
